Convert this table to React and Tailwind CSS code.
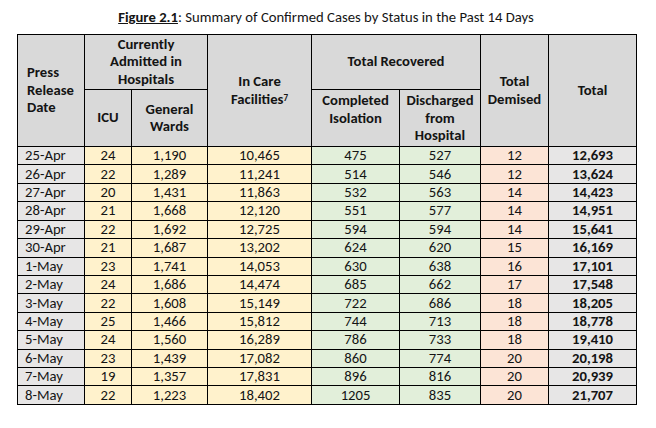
const rows = [
  ['25-Apr', 24, '1,190', '10,465', 475, 527, 12, '12,693'],
  ['26-Apr', 22, '1,289', '11,241', 514, 546, 12, '13,624'],
  ['27-Apr', 20, '1,431', '11,863', 532, 563, 14, '14,423'],
  ['28-Apr', 21, '1,668', '12,120', 551, 577, 14, '14,951'],
  ['29-Apr', 22, '1,692', '12,725', 594, 594, 14, '15,641'],
  ['30-Apr', 21, '1,687', '13,202', 624, 620, 15, '16,169'],
  ['1-May', 23, '1,741', '14,053', 630, 638, 16, '17,101'],
  ['2-May', 24, '1,686', '14,474', 685, 662, 17, '17,548'],
  ['3-May', 22, '1,608', '15,149', 722, 686, 18, '18,205'],
  ['4-May', 25, '1,466', '15,812', 744, 713, 18, '18,778'],
  ['5-May', 24, '1,560', '16,289', 786, 733, 18, '19,410'],
  ['6-May', 23, '1,439', '17,082', 860, 774, 20, '20,198'],
  ['7-May', 19, '1,357', '17,831', 896, 816, 20, '20,939'],
  ['8-May', 22, '1,223', '18,402', 1205, 835, 20, '21,707'],
]

const th = 'border border-black bg-[#d9d9d9] font-bold leading-[17.5px] p-0'
const td = 'border border-black text-center p-0 leading-[17px]'

export default function App() {
  return (
    <div
      className="w-[656px] h-[428px] bg-white text-[#141414] pt-[8px] pl-[17px]"
      style={{ fontFamily: 'Carlito, Lato, sans-serif' }}
    >
      {/* Title */}
      <div className="w-[618px] text-center text-[14.7px] leading-[18px] mb-[8px]">
        <span className="font-bold underline">Figure 2.1</span>: Summary of Confirmed Cases by Status in the Past 14 Days
      </div>

      <table className="table-fixed border-collapse w-[619px] text-[14.7px]">
        <colgroup>
          <col className="w-[67px]" />
          <col className="w-[47px]" />
          <col className="w-[76px]" />
          <col className="w-[104px]" />
          <col className="w-[88px]" />
          <col className="w-[81px]" />
          <col className="w-[68px]" />
          <col className="w-[88px]" />
        </colgroup>
        <thead>
          <tr className="h-[55px]">
            <th rowSpan={2} className={`${th} text-left pl-[9px]`}>Press<br />Release<br />Date</th>
            <th colSpan={2} className={`${th} text-center`}>Currently<br />Admitted in<br />Hospitals</th>
            <th rowSpan={2} className={`${th} text-center`}>
              In Care<br />Facilities<span className="text-[9px] align-top relative -top-[2px]">7</span>
            </th>
            <th colSpan={2} className={`${th} text-center`}>Total Recovered</th>
            <th rowSpan={2} className={`${th} text-center`}>Total<br />Demised</th>
            <th rowSpan={2} className={`${th} text-center`}>Total</th>
          </tr>
          <tr className="h-[57px]">
            <th className={`${th} text-center`}>ICU</th>
            <th className={`${th} text-center`}>General<br />Wards</th>
            <th className={`${th} text-center align-top pt-[2px]`}>Completed<br />Isolation</th>
            <th className={`${th} text-center align-top pt-[2px]`}>Discharged<br />from<br />Hospital</th>
          </tr>
        </thead>
        <tbody>
          {rows.map(r => (
            <tr key={r[0]} className="h-[18.43px]">
              <td className={`${td} text-left! pl-[7px] bg-[#e7e6e6]`}>{r[0]}</td>
              <td className={`${td} bg-[#fff2cc]`}>{r[1]}</td>
              <td className={`${td} bg-[#fff2cc]`}>{r[2]}</td>
              <td className={`${td} bg-[#fff2cc]`}>{r[3]}</td>
              <td className={`${td} bg-[#e2efda]`}>{r[4]}</td>
              <td className={`${td} bg-[#e2efda]`}>{r[5]}</td>
              <td className={`${td} bg-[#fce4d6]`}>{r[6]}</td>
              <td className={`${td} bg-[#e7e6e6] font-bold`}>{r[7]}</td>
            </tr>
          ))}
        </tbody>
      </table>
    </div>
  )
}
